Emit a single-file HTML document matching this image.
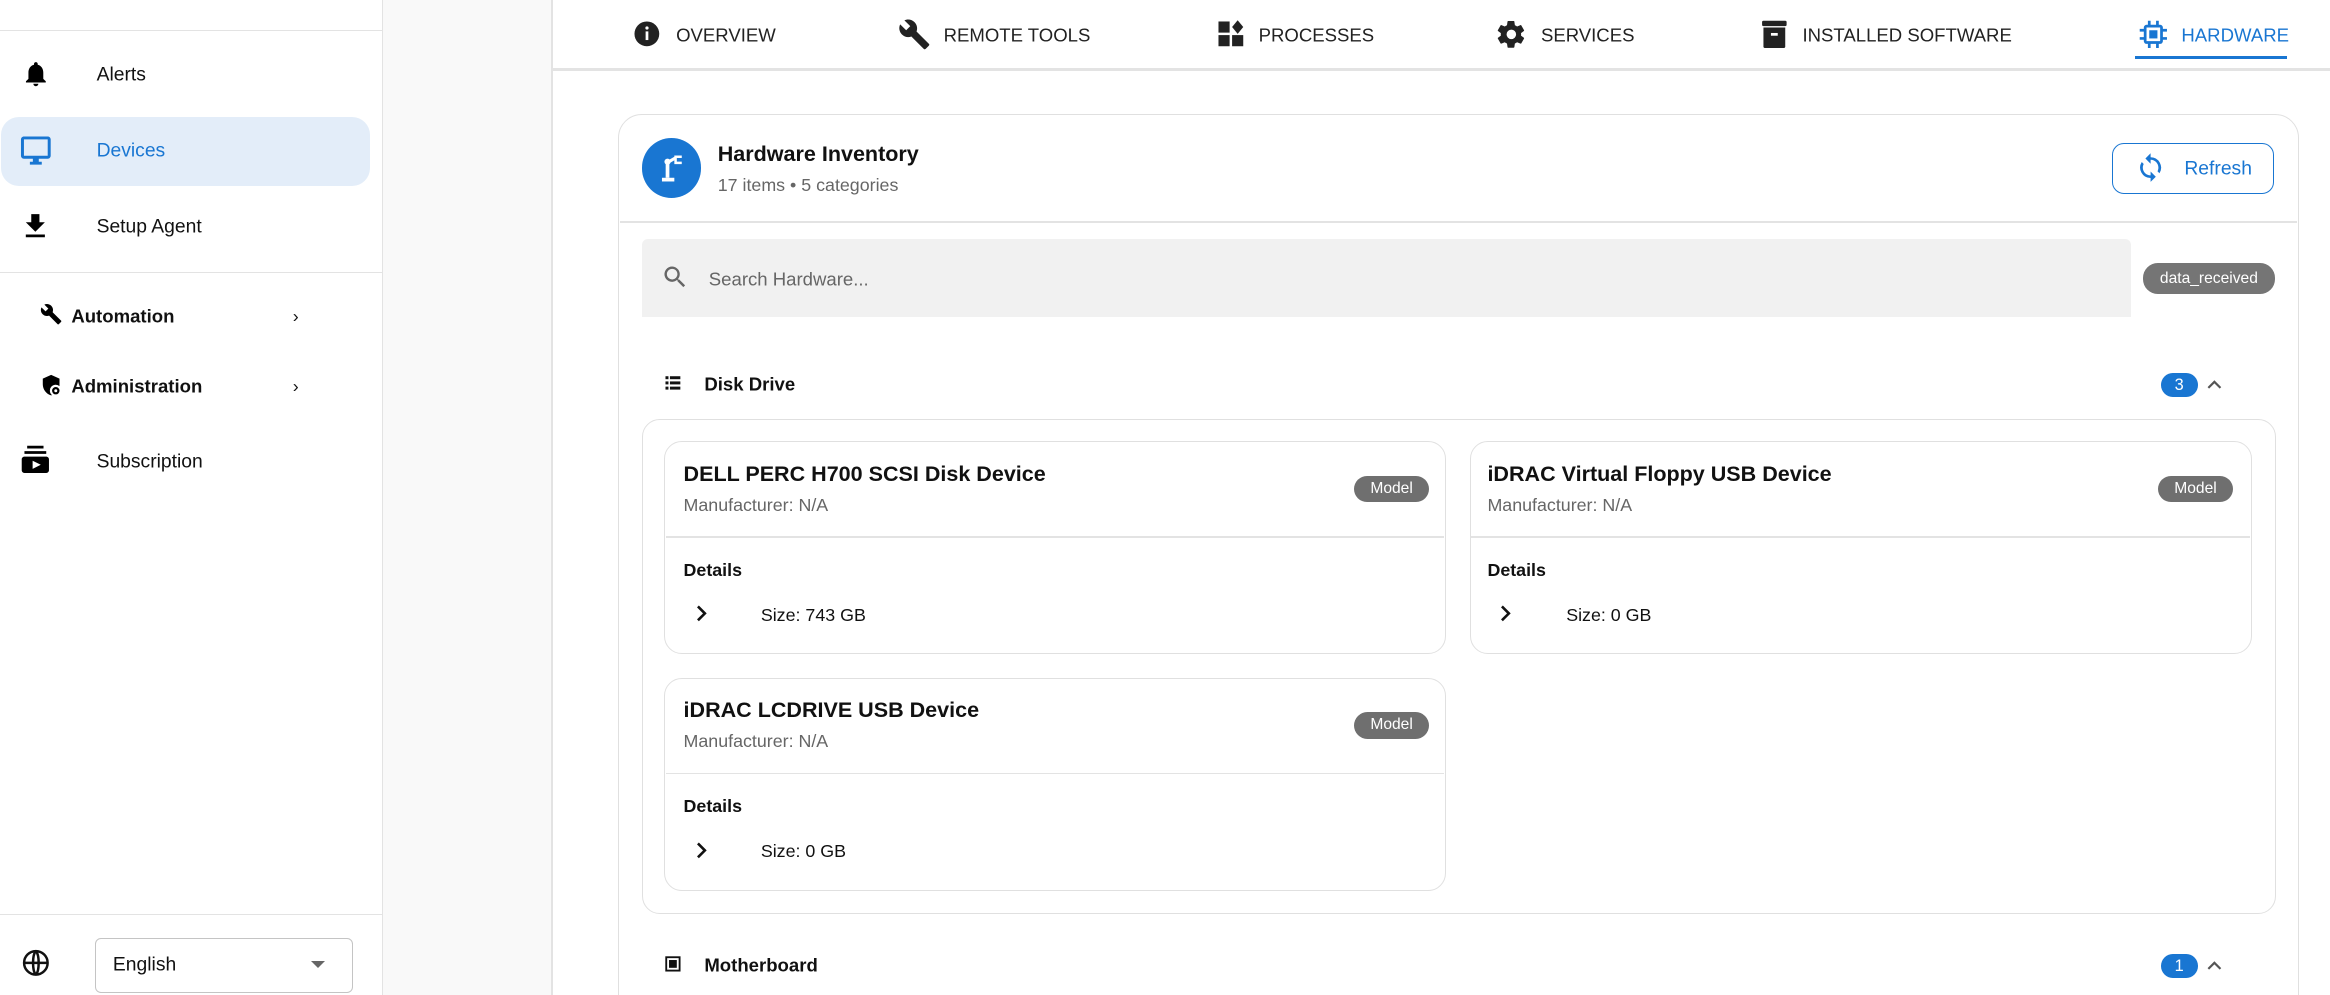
<!DOCTYPE html>
<html><head><meta charset="utf-8"><style>
html,body{margin:0;padding:0;width:2330px;height:995px;overflow:hidden;background:#fff}
#w{zoom:1.48597;width:1568px;height:670px;position:relative;font-family:"Liberation Sans",Arial,sans-serif;color:#111}
.a{position:absolute}
.t{position:absolute;white-space:nowrap;transform:translateY(-44%)}
.nav{font-size:13px}
.tab{font-size:12.5px;color:#222}
.card{position:absolute;border:1px solid #e0e0e0;border-radius:12px;background:#fff}
.chip{position:absolute;background:#6f6f6f;color:#fff;font-size:10.5px;border-radius:10px;text-align:center}
</style></head><body><div id="w">
<!-- sidebar -->
<div class="a" style="left:0;top:20px;width:257px;height:1px;background:#e3e3e3"></div>
<div class="a" style="left:257px;top:0;width:1px;height:670px;background:#e3e3e3"></div>
<div class="a" style="left:258px;top:0;width:113px;height:670px;background:#f9f9f9"></div>
<div class="a" style="left:371px;top:0;width:1px;height:670px;background:#e3e3e3"></div>
<svg class="a" style="left:14px;top:40px" width="20" height="20" viewBox="0 0 24 24"><path d="M12 22c1.1 0 2-.9 2-2h-4c0 1.1.9 2 2 2zm6-6v-5c0-3.07-1.64-5.64-4.5-6.32V4c0-.83-.67-1.5-1.5-1.5s-1.5.67-1.5 1.5v.68C7.63 5.36 6 7.92 6 11v5l-2 2v1h16v-1l-2-2z"/></svg>
<div class="t nav" style="left:65px;top:50px">Alerts</div>
<div class="a" style="left:1px;top:79px;width:248px;height:46px;background:#e3edf9;border-radius:12px"></div>
<svg class="a" style="left:12px;top:89px" width="24" height="24" viewBox="0 0 24 24"><path fill="#1976d2" d="M20 3H4c-1.1 0-2 .9-2 2v11c0 1.1.9 2 2 2h6v2H8v2h8v-2h-2v-2h6c1.1 0 2-.9 2-2V5c0-1.1-.9-2-2-2zm0 13H4V5h16v11z"/></svg>
<div class="t nav" style="left:65px;top:101px;color:#1976d2">Devices</div>
<svg class="a" style="left:13px;top:141px" width="22" height="22" viewBox="0 0 24 24"><path d="M19 9h-4V3H9v6H5l7 7 7-7zM5 18v2h14v-2H5z"/></svg>
<div class="t nav" style="left:65px;top:152px">Setup Agent</div>
<div class="a" style="left:0;top:183px;width:257px;height:1px;background:#e3e3e3"></div>
<svg class="a" style="left:27px;top:204px" width="15" height="15" viewBox="0 0 24 24"><path d="M22.7 19l-9.1-9.1c.9-2.3.4-5-1.5-6.9-2-2-5-2.4-7.4-1.3L9 6 6 9 1.6 4.7C.4 7.1.9 10.1 2.9 12.1c1.9 1.9 4.6 2.4 6.9 1.5l9.1 9.1c.4.4 1 .4 1.4 0l2.3-2.3c.5-.4.5-1.1.1-1.4z"/></svg>
<div class="t" style="left:48px;top:212px;font-size:12.5px;font-weight:bold">Automation</div>
<div class="t" style="left:197px;top:212px;font-size:12px">›</div>
<svg class="a" style="left:27px;top:252px" width="15" height="15" viewBox="0 0 24 24"><path d="M12 1L3 5v6c0 5.5 3.8 10.7 9 12 .3-.1.6-.2.9-.3A6 6 0 0 1 21 13V5l-9-4z"/><circle cx="17" cy="18" r="4"/><circle cx="17" cy="18" r="1.6" fill="#fff"/></svg>
<div class="t" style="left:48px;top:259px;font-size:12.5px;font-weight:bold">Administration</div>
<div class="t" style="left:197px;top:259px;font-size:12px">›</div>
<svg class="a" style="left:13px;top:298px" width="22" height="22" viewBox="0 0 24 24"><path d="M4 6h16v2H4zm2-4h12v2H6zm14 8H4c-1.1 0-2 .9-2 2v8c0 1.1.9 2 2 2h16c1.1 0 2-.9 2-2v-8c0-1.1-.9-2-2-2zm-10 9v-6l6 3-6 3z"/></svg>
<div class="t nav" style="left:65px;top:310px">Subscription</div>
<div class="a" style="left:0;top:615px;width:257px;height:1px;background:#e3e3e3"></div>
<svg class="a" style="left:14px;top:638px" width="20" height="20" viewBox="0 0 24 24" fill="none" stroke="#111" stroke-width="2"><circle cx="12" cy="12" r="9.5"/><path d="M2.5 12h19M12 2.5c3 3 3 16 0 19M12 2.5c-3 3-3 16 0 19"/></svg>
<div class="a" style="left:64px;top:631px;width:172px;height:36px;border:1px solid #c4c4c4;border-radius:4px"></div>
<div class="t" style="left:76px;top:649px;font-size:13px">English</div>
<div class="a" style="left:209px;top:647px;width:0;height:0;border-left:5px solid transparent;border-right:5px solid transparent;border-top:5px solid #666"></div>
<!-- tabs -->
<div class="a" style="left:372px;top:46px;width:1196px;height:2px;background:#e3e3e3"></div>
<svg class="a" style="left:425px;top:13px" width="20" height="20" viewBox="0 0 24 24"><circle cx="12" cy="12" r="10" fill="#222"/><rect x="11" y="10" width="2.2" height="7" fill="#fff"/><circle cx="12.1" cy="7.3" r="1.3" fill="#fff"/></svg>
<div class="t tab" style="left:455px;top:23px">OVERVIEW</div>
<svg class="a" style="left:604px;top:12px" width="22" height="22" viewBox="0 0 24 24"><path fill="#222" d="M22.7 19l-9.1-9.1c.9-2.3.4-5-1.5-6.9-2-2-5-2.4-7.4-1.3L9 6 6 9 1.6 4.7C.4 7.1.9 10.1 2.9 12.1c1.9 1.9 4.6 2.4 6.9 1.5l9.1 9.1c.4.4 1 .4 1.4 0l2.3-2.3c.5-.4.5-1.1.1-1.4z"/></svg>
<div class="t tab" style="left:635px;top:23px">REMOTE TOOLS</div>
<svg class="a" style="left:818px;top:13px" width="20" height="20" viewBox="0 0 24 24" fill="#222"><rect x="2" y="2" width="9" height="9"/><rect x="2" y="13" width="9" height="9"/><rect x="13" y="13" width="9" height="9"/><path d="M17.5 1l4.5 5.5-4.5 5.5-4.5-5.5z"/></svg>
<div class="t tab" style="left:847px;top:23px">PROCESSES</div>
<svg class="a" style="left:1006px;top:12px" width="22" height="22" viewBox="0 0 24 24"><path fill="#222" d="M19.1 12.9a7 7 0 0 0 0-1.8l2.1-1.6c.2-.1.2-.4.1-.6l-2-3.5c-.1-.2-.4-.3-.6-.2l-2.5 1a7.4 7.4 0 0 0-1.6-.9L14.2 2.6c0-.2-.2-.4-.5-.4h-4c-.2 0-.4.2-.5.4l-.4 2.7c-.6.2-1.1.6-1.6.9l-2.5-1c-.2-.1-.5 0-.6.2l-2 3.5c-.1.2-.1.5.1.6l2.1 1.6a7 7 0 0 0 0 1.8l-2.1 1.6c-.2.1-.2.4-.1.6l2 3.5c.1.2.4.3.6.2l2.5-1c.5.4 1 .7 1.6.9l.4 2.7c0 .2.2.4.5.4h4c.2 0 .4-.2.5-.4l.4-2.7c.6-.2 1.1-.6 1.6-.9l2.5 1c.2.1.5 0 .6-.2l2-3.5c.1-.2.1-.5-.1-.6l-2.1-1.6zM12 15.5a3.5 3.5 0 1 1 0-7 3.5 3.5 0 0 1 0 7z"/></svg>
<div class="t tab" style="left:1037px;top:23px">SERVICES</div>
<svg class="a" style="left:1183px;top:12px" width="22" height="22" viewBox="0 0 24 24" fill="#222"><rect x="3" y="2" width="18" height="4" rx="1"/><path d="M4 7h16v14c0 .6-.4 1-1 1H5c-.6 0-1-.4-1-1z"/><rect x="9.5" y="11" width="5" height="2" fill="#fff"/></svg>
<div class="t tab" style="left:1213px;top:23px">INSTALLED SOFTWARE</div>
<svg class="a" style="left:1438px;top:12px" width="22" height="22" viewBox="0 0 24 24" fill="none" stroke="#1976d2" stroke-width="2"><rect x="6" y="6" width="12" height="12" rx="1"/><rect x="10" y="10" width="4" height="4" fill="#1976d2"/><path d="M9 2v4M15 2v4M9 18v4M15 18v4M2 9h4M2 15h4M18 9h4M18 15h4"/></svg>
<div class="t tab" style="left:1468px;top:23px;color:#1976d2">HARDWARE</div>
<div class="a" style="left:1437px;top:38px;width:102px;height:2px;background:#1976d2"></div>
<!-- main card -->
<div class="card" style="left:416px;top:77px;width:1130px;height:620px;border-radius:16px"></div>
<div class="a" style="left:432px;top:93px;width:40px;height:40px;border-radius:50%;background:#1976d2"></div>
<svg class="a" style="left:442px;top:103px" width="20" height="20" viewBox="0 0 24 24" fill="#fff"><rect x="4" y="20" width="10" height="3"/><rect x="7" y="8" width="3" height="12"/><circle cx="8.5" cy="7" r="2.5"/><path d="M9 6l5-3 1.5 2-5 3z"/><path d="M15 2h5v2h-4v3h4v2h-6V2z"/></svg>
<div class="t" style="left:483px;top:103px;font-size:14.5px;font-weight:bold">Hardware Inventory</div>
<div class="t" style="left:483px;top:124px;font-size:12px;color:#666">17 items • 5 categories</div>
<div class="a" style="left:1421px;top:96px;width:108px;height:33px;border:1px solid #1976d2;border-radius:8px"></div>
<svg class="a" style="left:1437px;top:102px" width="21" height="21" viewBox="0 0 24 24"><path fill="#1976d2" d="M12 4V1L8 5l4 4V6c3.3 0 6 2.7 6 6 0 1-.3 2-.7 2.8l1.5 1.5A8 8 0 0 0 12 4zm0 14c-3.3 0-6-2.7-6-6 0-1 .3-2 .7-2.8L5.2 7.7A8 8 0 0 0 12 20v3l4-4-4-4v3z"/></svg>
<div class="t" style="left:1470px;top:113px;font-size:13px;color:#1976d2;font-weight:500">Refresh</div>
<div class="a" style="left:417px;top:149px;width:1129px;height:1px;background:#e3e3e3"></div>
<div class="a" style="left:432px;top:161px;width:1002px;height:52px;background:#f1f1f1;border-radius:4px 4px 0 0"></div>
<svg class="a" style="left:445px;top:177px" width="19" height="19" viewBox="0 0 24 24"><path fill="#666" d="M15.5 14h-.8l-.3-.3A6.5 6.5 0 1 0 9.5 16c1.6 0 3.1-.6 4.2-1.6l.3.3v.8l5 5 1.5-1.5-5-5zm-6 0a4.5 4.5 0 1 1 0-9 4.5 4.5 0 0 1 0 9z"/></svg>
<div class="t" style="left:477px;top:187px;font-size:12.5px;color:#666">Search Hardware...</div>
<div class="chip" style="left:1442px;top:177px;width:89px;height:21px;line-height:21px;background:#757575">data_received</div>
<!-- disk drive -->
<svg class="a" style="left:447px;top:252px" width="12" height="12" viewBox="0 0 24 24" fill="#111"><rect x="2" y="3" width="4" height="4"/><rect x="8" y="3" width="14" height="4"/><rect x="2" y="10" width="4" height="4"/><rect x="8" y="10" width="14" height="4"/><rect x="2" y="17" width="4" height="4"/><rect x="8" y="17" width="14" height="4"/></svg>
<div class="t" style="left:474px;top:258px;font-size:12.5px;font-weight:bold">Disk Drive</div>
<div class="a" style="left:1454px;top:251px;width:25px;height:16px;border-radius:8px;background:#1976d2;color:#fff;font-size:11px;text-align:center;line-height:17px">3</div>
<svg class="a" style="left:1483px;top:252px" width="14" height="14" viewBox="0 0 24 24"><path d="M5 16l7-7 7 7" fill="none" stroke="#555" stroke-width="2.5"/></svg>
<div class="card" style="left:432px;top:282px;width:1098px;height:332px"></div>
<!-- item cards -->
<div class="card" style="left:447px;top:297px;width:525px;height:142px"></div>
<div class="t" style="left:460px;top:318px;font-size:14.5px;font-weight:bold">DELL PERC H700 SCSI Disk Device</div>
<div class="t" style="left:460px;top:339px;font-size:12px;color:#666">Manufacturer: N/A</div>
<div class="chip" style="left:911px;top:320px;width:51px;height:18px;line-height:18px">Model</div>
<div class="a" style="left:448px;top:361px;width:524px;height:1px;background:#e3e3e3"></div>
<div class="t" style="left:460px;top:383px;font-size:12px;font-weight:bold">Details</div>
<svg class="a" style="left:465px;top:406px" width="14" height="14" viewBox="0 0 24 24"><path d="M8 4l8 8-8 8" fill="none" stroke="#111" stroke-width="3"/></svg>
<div class="t" style="left:512px;top:413px;font-size:12px">Size: 743 GB</div>

<div class="card" style="left:989px;top:297px;width:525px;height:142px"></div>
<div class="t" style="left:1001px;top:318px;font-size:14.5px;font-weight:bold">iDRAC Virtual Floppy USB Device</div>
<div class="t" style="left:1001px;top:339px;font-size:12px;color:#666">Manufacturer: N/A</div>
<div class="chip" style="left:1452px;top:320px;width:51px;height:18px;line-height:18px">Model</div>
<div class="a" style="left:990px;top:361px;width:524px;height:1px;background:#e3e3e3"></div>
<div class="t" style="left:1001px;top:383px;font-size:12px;font-weight:bold">Details</div>
<svg class="a" style="left:1006px;top:406px" width="14" height="14" viewBox="0 0 24 24"><path d="M8 4l8 8-8 8" fill="none" stroke="#111" stroke-width="3"/></svg>
<div class="t" style="left:1054px;top:413px;font-size:12px">Size: 0 GB</div>

<div class="card" style="left:447px;top:456px;width:525px;height:142px"></div>
<div class="t" style="left:460px;top:477px;font-size:14.5px;font-weight:bold">iDRAC LCDRIVE USB Device</div>
<div class="t" style="left:460px;top:498px;font-size:12px;color:#666">Manufacturer: N/A</div>
<div class="chip" style="left:911px;top:479px;width:51px;height:18px;line-height:18px">Model</div>
<div class="a" style="left:448px;top:520px;width:524px;height:1px;background:#e3e3e3"></div>
<div class="t" style="left:460px;top:542px;font-size:12px;font-weight:bold">Details</div>
<svg class="a" style="left:465px;top:565px" width="14" height="14" viewBox="0 0 24 24"><path d="M8 4l8 8-8 8" fill="none" stroke="#111" stroke-width="3"/></svg>
<div class="t" style="left:512px;top:572px;font-size:12px">Size: 0 GB</div>
<!-- motherboard -->
<svg class="a" style="left:447px;top:643px" width="12" height="12" viewBox="0 0 24 24" fill="none" stroke="#111" stroke-width="2.5"><rect x="3" y="3" width="18" height="18"/><rect x="8" y="8" width="8" height="8" fill="#111"/></svg>
<div class="t" style="left:474px;top:649px;font-size:12.5px;font-weight:bold">Motherboard</div>
<div class="a" style="left:1454px;top:642px;width:25px;height:16px;border-radius:8px;background:#1976d2;color:#fff;font-size:11px;text-align:center;line-height:17px">1</div>
<svg class="a" style="left:1483px;top:643px" width="14" height="14" viewBox="0 0 24 24"><path d="M5 16l7-7 7 7" fill="none" stroke="#555" stroke-width="2.5"/></svg>
</div></body></html>
